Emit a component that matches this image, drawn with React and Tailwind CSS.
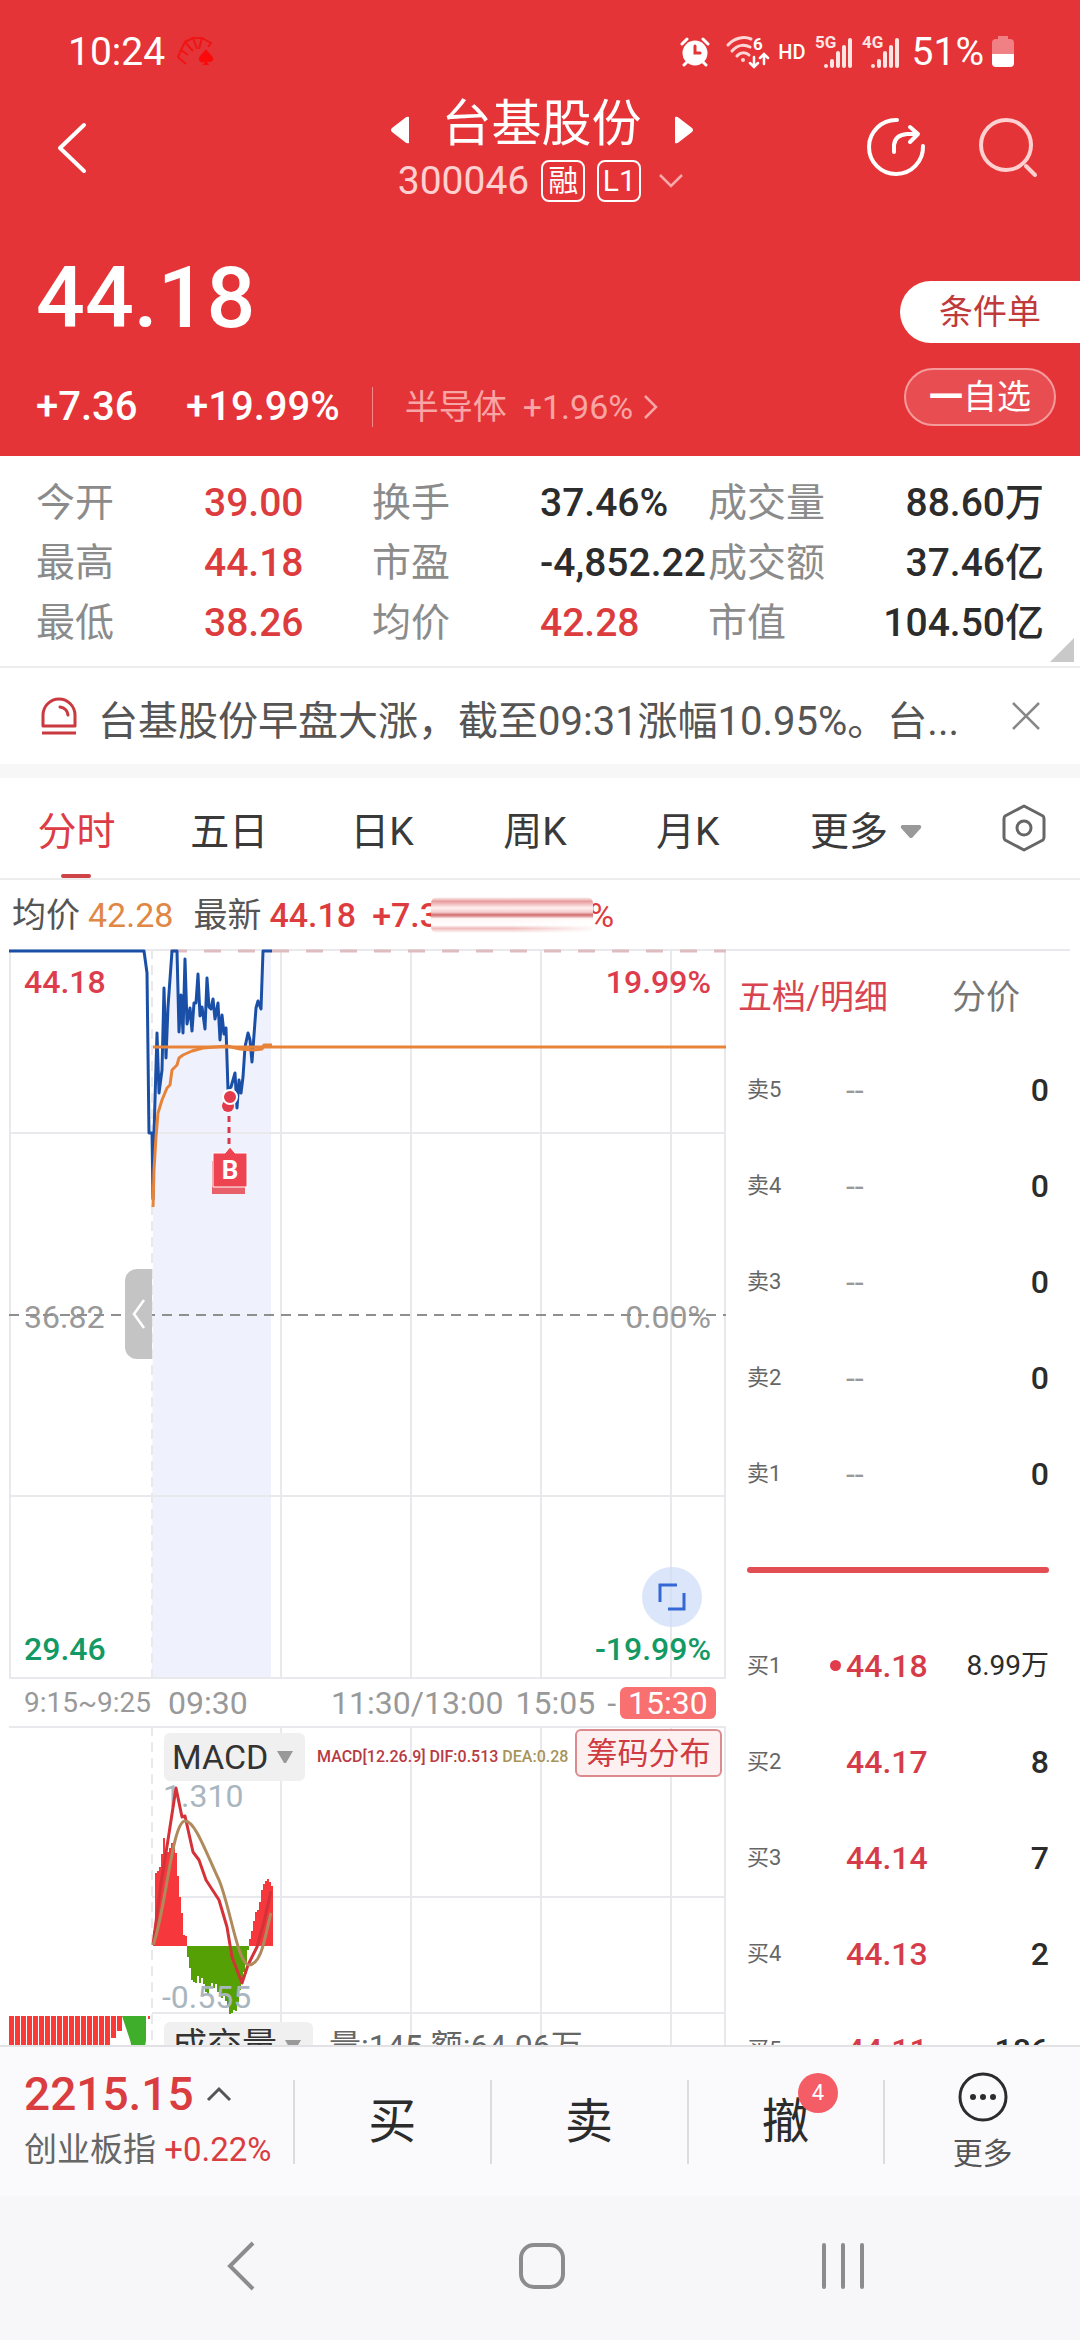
import React from 'react'

const stats = [
  { label: '今开', value: '39.00', tone: 'up' },
  { label: '换手', value: '37.46%' },
  { label: '成交量', value: '88.60万', end: true },
  { label: '最高', value: '44.18', tone: 'up' },
  { label: '市盈', value: '-4,852.22' },
  { label: '成交额', value: '37.46亿', end: true },
  { label: '最低', value: '38.26', tone: 'up' },
  { label: '均价', value: '42.28', tone: 'up' },
  { label: '市值', value: '104.50亿', end: true },
]

const periods = ['分时', '五日', '日K', '周K', '月K']

const asks = ['卖5', '卖4', '卖3', '卖2', '卖1']

const bids = [
  { label: '买1', price: '44.18', volume: '8.99万', current: true },
  { label: '买2', price: '44.17', volume: '8' },
  { label: '买3', price: '44.14', volume: '7' },
  { label: '买4', price: '44.13', volume: '2' },
  { label: '买5', price: '44.11', volume: '186' },
]

const pricePoints =
  '9,2 144,2 147,24 149,184 152,184 153,250 154,184 157,84 159,144 162,121 164,39 166,109 168,58 172,2 177,2 179,83 181,46 183,84 185,10 187,75 190,59 192,82 194,54 196,54 198,25 200,67 202,58 205,80 207,29 209,58 211,60 213,50 215,70 218,54 220,91 222,66 224,85 226,79 228,141 231,138 235,124 237,159 239,131 241,144 243,128 245,98 248,84 250,91 252,113 256,59 258,52 261,60 263,2 272,2'

const priceArea =
  '152,729 153,250 154,184 157,84 159,144 162,121 164,39 166,109 168,58 172,2 177,2 179,83 181,46 183,84 185,10 187,75 190,59 192,82 194,54 198,25 200,67 205,80 207,29 209,58 213,50 215,70 218,54 220,91 222,66 226,79 228,141 235,124 237,159 241,144 248,84 252,113 258,52 261,60 263,2 271,2 271,729'

const avgPoints =
  '153,258 154,221 156,188 158,164 162,151 167,139 170,136 172,121 177,116 179,109 183,106 192,102 203,99 227,97 240,100 253,101 262,100 264,96 272,96'

const ZERO = 220

// [x, y] of the far end of each histogram bar
const macdBars = [
  [153, 205], [155, 147], [157, 145], [159, 141], [161, 128], [163, 112], [165, 124], [167, 126], [169, 122], [171, 117],
  [173, 119], [175, 127], [177, 150], [179, 171], [181, 187], [183, 209], [185, 210], [187, 231], [189, 242], [191, 254],
  [193, 256], [195, 257], [197, 250], [199, 257], [201, 252], [203, 258], [205, 266], [207, 268], [209, 260], [211, 257],
  [213, 262], [215, 258], [217, 266], [219, 268], [221, 272], [223, 270], [225, 275], [227, 280], [229, 288], [231, 287],
  [233, 284], [235, 285], [237, 276], [239, 264], [241, 258], [243, 246], [245, 236], [247, 224], [249, 213], [251, 205],
  [253, 195], [255, 186], [257, 184], [259, 176], [261, 164], [263, 158], [265, 155], [267, 153], [269, 156], [271, 160],
]

const auctionBars = Array.from({ length: 19 }, (_, i) => 9 + i * 6)

function StatusBar() {
  return (
    <div className="flex h-24 items-center justify-between pt-2 pr-[66px] pl-[68px]">
      <div className="flex items-center gap-3">
        <span className="text-[39px] leading-none">10:24</span>
        <svg width="38" height="32" viewBox="0 0 38 32" fill="none" stroke="#f01414" strokeWidth="2">
          <path d="M9 28L1 21l3-7 7 5M4 14l4-8 8 9M8 6l8-4 4 11M16 2l9 0-3 11M25 2l9 5-3 4" />
          <path d="M29 13c-3 5-8 7-7 11 1 3 5 3 6 1l-2 4h6l-2-4c2 2 5 1 6-1 1-4-4-6-7-11z" fill="#fa0a0a" stroke="none" />
        </svg>
      </div>
      <div className="flex items-center">
        <svg width="30" height="30" viewBox="0 0 30 30" fill="none" stroke="#fff" strokeWidth="3" strokeLinecap="round">
          <circle cx="15" cy="16" r="12.5" fill="#fff" stroke="none" />
          <path d="M2 7l5-5M28 7l-5-5M7 25l-3 3M23 25l3 3" />
          <path d="M15 9v7h5" stroke="#e53437" />
        </svg>
        <svg className="ml-4 overflow-visible" width="44" height="34" viewBox="0 0 44 34" fill="none" stroke="#ffd5d5" strokeWidth="3" strokeLinecap="round">
          <path d="M2 10c6-7 16-9 23-6M6 16c5-6 12-7 18-4M11 21c3-4 9-4 12-1" />
          <circle cx="17" cy="25" r="2" fill="#ffd5d5" stroke="none" />
          <path d="M28 22v9M24 28l4 4 4-4M38 29v-9M34 23l4-4 4 4" stroke="#fff" strokeWidth="2.5" />
          <text x="27" y="15" fontSize="17" fontWeight="700" fill="#fff" stroke="none">6</text>
        </svg>
        <span className="ml-2 text-[20px] leading-none font-medium">HD</span>
        <Signal label="5G" />
        <Signal label="4G" />
        <span className="ml-3 text-[39px] leading-none">51%</span>
        <svg className="ml-2" width="22" height="32" viewBox="0 0 22 32">
          <path d="M6 0h10v3h2q4 0 4 4v11H0V7q0-4 4-4h2z" fill="#f08083" />
          <path d="M0 18h22v9q0 4-4 4H4q-4 0-4-4z" fill="#fff" />
        </svg>
      </div>
    </div>
  )
}

function Signal({ label }) {
  return (
    <svg className="ml-[9px]" width="38" height="42" viewBox="0 -4 38 42" stroke="#ffe4e4" strokeWidth="4" strokeLinecap="round">
      <text x="0" y="13" fontSize="17" fontWeight="700" fill="#ffe4e4" stroke="none">{label}</text>
      <path d="M11 31v0M17 26v5M23 18v13M29 12v19M35 5v26" />
    </svg>
  )
}

function Header() {
  return (
    <header className="shrink-0 bg-[#e53437] text-white">
      <StatusBar />
      <div className="flex h-[106px] items-center justify-between pr-[41px] pl-[54px]">
        <button type="button" aria-label="返回" className="flex w-[164px] pb-1">
          <svg width="36" height="54" viewBox="0 0 36 54" fill="none" stroke="#fff" strokeWidth="4" strokeLinecap="round" strokeLinejoin="round">
            <path d="M30 5L6 28l24 23" />
          </svg>
        </button>
        <div className="flex flex-col items-center">
          <div className="flex items-center gap-8">
            <button type="button" aria-label="上一只">
              <svg className="mt-3" width="20" height="28" viewBox="0 0 20 28" fill="#fff"><path d="M19 1v26q-2 1-4-1L2 16q-2-2 0-4L15 2q2-2 4-1z" /></svg>
            </button>
            <h1 className="text-[50px] leading-[56px]">台基股份</h1>
            <button type="button" aria-label="下一只">
              <svg className="mt-3" width="20" height="28" viewBox="0 0 20 28" fill="#fff"><path d="M1 1v26q2 1 4-1l13-10q2-2 0-4L5 2q-2-2-4-1z" /></svg>
            </button>
          </div>
          <button type="button" className="mt-2 flex items-center gap-3">
            <span className="text-[39px] leading-[42px] text-[#ffd0d0]">300046</span>
            <span className="flex h-[42px] w-11 items-center justify-center rounded-lg border-2 border-white text-[30px] leading-none">融</span>
            <span className="flex h-[42px] w-11 items-center justify-center rounded-lg border-2 border-white text-[30px] leading-none">L1</span>
            <svg className="ml-1" width="28" height="18" viewBox="0 0 28 18" fill="none" stroke="#f7aaaa" strokeWidth="2.5"><path d="M3 3l11 11L25 3" /></svg>
          </button>
        </div>
        <div className="flex w-[174px] items-center justify-between pb-1">
          <button type="button" aria-label="分享">
            <svg width="62" height="62" viewBox="0 0 62 62" fill="none" stroke="#fff" strokeWidth="4" strokeLinecap="round" strokeLinejoin="round">
              <path d="M32 4A27 27 0 1 0 58 30" />
              <path d="M29 36v-7q1-10 13-11h10M45 11l8 7-8 8" />
            </svg>
          </button>
          <button type="button" aria-label="搜索">
            <svg width="62" height="62" viewBox="0 0 62 62" fill="none" stroke="#ffd0d0" strokeWidth="4" strokeLinecap="round">
              <circle cx="29" cy="29" r="25" />
              <path d="M49 50l9 9" />
            </svg>
          </button>
        </div>
      </div>
      <div className="flex justify-between pb-[26px]">
        <div className="pt-12 pl-9">
          <div className="text-[86px] leading-[96px] font-medium">44.18</div>
          <div className="mt-9 flex h-12 items-center pt-[2px] whitespace-nowrap">
            <span className="w-[150px] text-[40px] font-medium">+7.36</span>
            <span className="text-[40px] font-medium">+19.99%</span>
            <span className="ml-8 h-10 w-px bg-[#f28a8b]" />
            <a href="#sector" className="ml-8 flex items-center text-[34px] text-[#f8a5a5]">
              半导体
              <span className="ml-4">+1.96%</span>
              <svg className="ml-2" width="18" height="28" viewBox="0 0 18 28" fill="none" stroke="#f8a5a5" strokeWidth="2.5"><path d="M4 3l11 11L4 25" /></svg>
            </a>
          </div>
        </div>
        <div className="flex flex-col items-end pt-[79px]">
          <button type="button" className="h-[62px] w-[180px] rounded-l-full bg-white text-[34px] leading-none text-[#c0393b]">条件单</button>
          <button type="button" className="mt-[25px] mr-6 h-[58px] w-[152px] rounded-full border-2 border-[#f59a9b] bg-[#e84e51] text-[34px] leading-none">
            <b className="font-bold">一</b>自选
          </button>
        </div>
      </div>
    </header>
  )
}

function Stats() {
  return (
    <section className="relative shrink-0 border-b-2 border-[#ececee] px-9 pt-[17px] pb-[13px]">
      <dl className="grid grid-cols-3">
        {stats.map((s) => (
          <div key={s.label} className="grid h-[60px] grid-cols-2 items-center whitespace-nowrap text-[39px] leading-none">
            <dt className="text-[#8b8b8b]">{s.label}</dt>
            <dd className={`font-medium ${s.tone === 'up' ? 'text-[#dd3c3e]' : 'text-[#2c2c2c]'} ${s.end ? 'flex justify-end' : ''}`}>
              {s.value}
            </dd>
          </div>
        ))}
      </dl>
      <svg className="absolute right-[6px] bottom-1" width="24" height="24" viewBox="0 0 24 24"><path d="M24 0v24H0z" fill="#c9c9c9" /></svg>
    </section>
  )
}

function News() {
  return (
    <section className="flex h-24 shrink-0 items-center px-10">
      <svg className="shrink-0" width="38" height="38" viewBox="0 0 38 38" fill="none" stroke="#c9393f" strokeWidth="3">
        <path d="M3 29V18a16 16 0 0 1 32 0v11z" strokeLinejoin="round" />
        <path d="M20 10q7 1 8 8" strokeLinecap="round" />
        <path d="M2 36h34" />
      </svg>
      <a href="#news" className="ml-5 min-w-0 flex-1 pt-3 text-[40px] leading-[56px] whitespace-nowrap text-[#555]">
        台基股份早盘大涨，截至09:31涨幅10.95%。台...
      </a>
      <button type="button" aria-label="关闭" className="ml-4">
        <svg width="28" height="28" viewBox="0 0 28 28" stroke="#888" strokeWidth="2.5"><path d="M1 1l26 26M27 1L1 27" /></svg>
      </button>
    </section>
  )
}

function PeriodTabs() {
  return (
    <nav className="grid h-[102px] shrink-0 grid-cols-[15fr_15fr_15fr_15fr_15fr_20fr_11fr] border-b-2 border-[#ececee] text-[39px] leading-none text-[#3a3a3a]">
      {periods.map((p, i) => (
        <button
          key={p}
          type="button"
          className={i === 0 ? 'relative pt-2 text-[#dd3c46]' : 'relative pt-2'}
        >
          {p}
          {i === 0 && <span className="absolute bottom-0 left-1/2 h-1 w-[30px] -translate-x-1/2 rounded-sm bg-[#cf4347]" />}
        </button>
      ))}
      <button type="button" className="flex items-center justify-center gap-3 pt-2">
        更多
        <svg width="22" height="14" viewBox="0 0 22 14"><path d="M2 0h18q2 1 1 3l-9 10h-2L1 3Q0 1 2 0z" fill="#999" /></svg>
      </button>
      <button type="button" aria-label="设置" className="flex items-center justify-center">
        <svg width="44" height="48" viewBox="0 0 44 48" fill="none" stroke="#666" strokeWidth="3" strokeLinejoin="round">
          <path d="M22 2l19 10q1 1 1 3v18q0 2-1 3L22 46 3 36q-1-1-1-3V15q0-2 1-3z" />
          <circle cx="22" cy="24" r="7" />
        </svg>
      </button>
    </nav>
  )
}

function QuoteLine() {
  return (
    <div className="flex h-[69px] shrink-0 items-center px-3 text-[34px] leading-none text-[#555]">
      均价
      <span className="ml-2 text-[#e08746]">42.28</span>
      <span className="ml-5">最新</span>
      <span className="ml-2 font-medium text-[#dd3c3e]">44.18</span>
      <span className="ml-4 font-medium text-[#dd3c3e]">+7.3</span>
      {/* masked part of the change figure */}
      <svg className="relative -ml-2 shrink-0" width="162" height="36" viewBox="0 0 162 36">
        <defs>
          <linearGradient id="mask" x1="0" y1="0" x2="0" y2="1">
            <stop offset="0" stopColor="#fff" />
            <stop offset="0.12" stopColor="#e79a9a" />
            <stop offset="0.3" stopColor="#fff1f1" />
            <stop offset="0.42" stopColor="#f6cfcf" />
            <stop offset="0.5" stopColor="#cf6a6a" />
            <stop offset="0.6" stopColor="#fff4f4" />
            <stop offset="0.78" stopColor="#fff" />
            <stop offset="0.87" stopColor="#f0b9b9" />
            <stop offset="1" stopColor="#fff" />
          </linearGradient>
          <linearGradient id="fade" x1="0" y1="0" x2="1" y2="0">
            <stop offset="0.5" stopColor="#fff" stopOpacity="0" />
            <stop offset="1" stopColor="#fff" stopOpacity="0.9" />
          </linearGradient>
        </defs>
        <rect width="162" height="36" rx="6" fill="url(#mask)" />
        <rect y="23" width="162" height="13" fill="url(#fade)" />
      </svg>
      <span className="-ml-1 text-[#dd3c3e]">%</span>
    </div>
  )
}

function PriceChart() {
  return (
    <div className="relative">
      <svg viewBox="0 0 726 730" className="block h-auto w-full" fill="none">
        <polygon points={priceArea} fill="#eff2fd" />
        <g stroke="#e9e9ed" strokeWidth="2">
          <path d="M9 1H726M9 184H726M9 547H726M9 729H726" />
          <path d="M10 0V730M281 0V730M411 0V730M541 0V730M671 0V730M725 0V730" />
          <path d="M152 0V730" strokeDasharray="10 6" />
        </g>
        <path d="M170 2H726" stroke="#dfbcc0" strokeWidth="3" strokeDasharray="17 17" />
        <g fontSize="32" fontWeight="500">
          <text x="24" y="44" fill="#dd3c4c">44.18</text>
          <text x="711" y="44" fill="#dd3c4c" textAnchor="end">19.99%</text>
          <text x="24" y="379" fill="#999" fontWeight="400">36.82</text>
          <text x="711" y="379" fill="#999" fontWeight="400" textAnchor="end">0.00%</text>
          <text x="24" y="711" fill="#139a64">29.46</text>
          <text x="711" y="711" fill="#139a64" textAnchor="end">-19.99%</text>
        </g>
        <path d="M9 366H726" stroke="#8f8f8f" strokeWidth="2" strokeDasharray="10 7" />
        <polyline points={pricePoints} stroke="#1a4fa8" strokeWidth="3" strokeLinejoin="round" />
        <path d="M153 98H726" stroke="#e8833a" strokeWidth="3" />
        <polyline points={avgPoints} stroke="#e8833a" strokeWidth="3" strokeLinejoin="round" />
        <path d="M229 167V200" stroke="#d9384a" strokeWidth="3" strokeDasharray="6 5" />
        <circle cx="228" cy="157" r="6" fill="#e23b4c" />
        <circle cx="230" cy="148" r="7" fill="#e23b4c" stroke="#fff" strokeWidth="2" />
        <path d="M212 212h33v33h-33z" fill="#e8606a" />
        <path d="M213 204h12l5-6 5 6h12v34h-34z" fill="#ee4452" stroke="#fff" />
        <text x="230" y="230" fontSize="26" fontWeight="700" fill="#fff" textAnchor="middle">B</text>
      </svg>
      <button type="button" aria-label="展开集合竞价" className="absolute top-[320px] left-[125px] flex h-[90px] w-[27px] items-center justify-center rounded-l-xl bg-[#c4c4c4]">
        <svg width="14" height="30" viewBox="0 0 14 30" fill="none" stroke="#fff" strokeWidth="2.5"><path d="M12 1L2 15l10 14" /></svg>
      </button>
      <button type="button" aria-label="全屏" className="absolute right-6 bottom-[52px] flex size-[60px] items-center justify-center rounded-full bg-[#ccdcf8]/70">
        <svg width="28" height="28" viewBox="0 0 28 28" fill="none" stroke="#3568d4" strokeWidth="3"><path d="M2 19V2h17M26 10v16H10" /></svg>
      </button>
    </div>
  )
}

function TimeAxis() {
  return (
    <div className="flex h-[47px] items-center pl-6 text-[32px] leading-none whitespace-nowrap text-[#999]">
      <span className="w-[144px] text-[28px]">9:15~9:25</span>
      <span className="w-[163px]">09:30</span>
      <span>11:30/13:00</span>
      <span className="ml-3">15:05</span>
      <span className="ml-3">-</span>
      <span className="ml-1 rounded-md bg-[#f8706f] px-2 text-white">15:30</span>
    </div>
  )
}

function MacdChart() {
  return (
    <div className="relative">
      <svg viewBox="0 0 726 288" className="block h-auto w-full" fill="none">
        <g stroke="#e9e9ed" strokeWidth="2">
          <path d="M9 1H726M152 171H726M152 287H726" />
          <path d="M281 0V288M411 0V288M541 0V288M671 0V288M725 0V288" />
          <path d="M152 0V288" strokeDasharray="10 6" />
        </g>
        <text x="163" y="81" fontSize="32" fill="#aab6bf">1.310</text>
        {macdBars.map(([x, y]) => (
          <rect
            key={x}
            x={x}
            y={Math.min(y, ZERO)}
            width="2"
            height={Math.abs(y - ZERO)}
            fill={y < ZERO ? '#f6383d' : '#55a005'}
          />
        ))}
        <polyline
          points="153,219 161,157 168,114 176,62 182,91 185,90 193,126 199,134 206,154 219,174 227,201 232,231 242,257 248,239 257,221 264,196 271,165"
          stroke="#d43238"
          strokeWidth="3"
          strokeLinejoin="round"
        />
        <path d="M153 219C165 190 172 95 185 95C195 95 205 124 219 154C230 180 238 239 249 239C262 238 265 210 271 187" stroke="#b08a5c" strokeWidth="3" />
        <text x="162" y="282" fontSize="32" fill="#aab6bf">-0.555</text>
      </svg>
      <div className="absolute inset-x-0 top-[3px] flex items-start pr-1 pl-[164px]">
        <button type="button" className="mt-1 flex h-12 w-[141px] shrink-0 items-center justify-between rounded-md bg-[#f0f0f0] px-2 pr-3 text-[34px] leading-none text-[#333]">
          MACD
          <Caret />
        </button>
        <div className="mt-4 ml-3 min-w-0 flex-1 overflow-hidden text-[16px] leading-6 font-medium whitespace-nowrap text-[#b83a42]">
          MACD[12.26.9] DIF:0.513 <span className="text-[#a8935a]">DEA:0.28</span>
        </div>
        <button type="button" className="h-12 w-[147px] shrink-0 rounded-md border-2 border-[#dd8a8e] bg-[#fdf0f0] text-[31px] leading-none text-[#cf3b42]">筹码分布</button>
      </div>
    </div>
  )
}

function Caret() {
  return <svg width="16" height="12" viewBox="0 0 16 12"><path d="M0 0h16L9 12H7z" fill="#999" /></svg>
}

function VolumeChart() {
  return (
    <div className="relative">
      <svg viewBox="0 0 726 120" className="block h-auto w-full">
        <path d="M281 0V120M411 0V120M541 0V120M671 0V120M725 0V120" stroke="#e9e9ed" strokeWidth="2" />
        <path d="M152 0V120" stroke="#e9e9ed" strokeWidth="2" strokeDasharray="10 6" />
        {auctionBars.map((x, i) => (
          <rect key={x} x={x} y="2" width="5" height={i < 17 ? 80 : 29 - (i - 16) * 7} fill="#fb3a38" />
        ))}
        <path d="M122 2h24v24l-3 20h-8l-5-20-4-12z" fill="#3fae2a" />
        <rect x="148" y="2" width="2" height="3" fill="#fb3a38" />
      </svg>
      <div className="absolute inset-x-0 top-2 flex items-center pl-[164px]">
        <button type="button" className="flex h-12 w-[149px] items-center justify-between rounded-md bg-[#f0f0f0] px-2 pr-3 text-[35px] leading-none text-[#333]">
          成交量
          <Caret />
        </button>
        <span className="ml-4 text-[32px] leading-none text-[#666]">量:145 额:64.06万</span>
      </div>
    </div>
  )
}

function OrderBook() {
  return (
    <aside className="w-[354px] shrink-0 pr-[10px]">
      <div className="flex h-[93px] items-center border-t-2 border-[#e9e9ed] pl-3 text-[34px] leading-none">
        <button type="button" className="text-[#d8444f]">五档/明细</button>
        <button type="button" className="ml-16 text-[#777]">分价</button>
      </div>
      <table className="ml-[21px] w-[302px] table-fixed text-[32px] leading-none">
        <colgroup>
          <col className="w-[99px]" />
          <col className="w-[90px]" />
          <col />
        </colgroup>
        <tbody>
          {asks.map((label) => (
            <tr key={label} className="h-24">
              <th scope="row" className="text-left text-[22px] font-normal text-[#666]">{label}</th>
              <td className="text-[#999]">--</td>
              <td className="text-right font-medium text-[#2c2c2c]">0</td>
            </tr>
          ))}
          <tr className="h-24">
            <td colSpan={3}><div className="h-[6px] rounded-full bg-[#e24e54]" /></td>
          </tr>
          {bids.map((b) => (
            <tr key={b.label} className="h-24">
              <th scope="row" className="text-left text-[22px] font-normal text-[#666]">{b.label}</th>
              <td className="relative font-medium text-[#d63b49]">
                {b.current && <span className="absolute top-[42px] -left-4 size-[11px] rounded-full bg-[#e23b4c]" />}
                {b.price}
              </td>
              <td className={`text-right text-[#2c2c2c] ${b.current ? 'text-[28px]' : 'font-medium'}`}>{b.volume}</td>
            </tr>
          ))}
        </tbody>
      </table>
    </aside>
  )
}

function Divider() {
  return <span className="h-[84px] w-[2px] shrink-0 bg-[#dcdcde]" />
}

function TradeBar() {
  return (
    <footer className="flex h-[151px] shrink-0 items-center border-t-2 border-[#e2e2e4] bg-[#fafafc] text-[#2c2c2c]">
      <div className="w-[293px] pl-6 whitespace-nowrap">
        <button type="button" className="flex items-center gap-3 text-[46px] leading-[56px] font-medium text-[#d93d3f]">
          2215.15
          <svg width="26" height="16" viewBox="0 0 26 16" fill="none" stroke="#555" strokeWidth="3"><path d="M2 14L13 3l11 11" /></svg>
        </button>
        <div className="text-[33px] leading-[56px] text-[#666]">
          创业板指 <span className="text-[#d93d3f]">+0.22%</span>
        </div>
      </div>
      <Divider />
      <button type="button" className="h-full flex-1 text-[48px] leading-none">买</button>
      <Divider />
      <button type="button" className="h-full flex-1 text-[48px] leading-none">卖</button>
      <Divider />
      <button type="button" className="h-full flex-1 text-[48px] leading-none">
        <span className="relative">
          撤
          <span className="absolute -top-5 -right-7 flex size-10 items-center justify-center rounded-full bg-[#f45c66] text-[22px] text-white">4</span>
        </span>
      </button>
      <Divider />
      <button type="button" className="flex h-full flex-1 flex-col items-center pt-6 text-[30px] leading-none text-[#555]">
        <svg width="52" height="52" viewBox="0 0 52 52">
          <circle cx="26" cy="26" r="23" fill="none" stroke="#2c2c2c" strokeWidth="3" />
          <g fill="#2c2c2c"><circle cx="16" cy="26" r="3" /><circle cx="26" cy="26" r="3" /><circle cx="36" cy="26" r="3" /></g>
        </svg>
        <span className="mt-4">更多</span>
      </button>
    </footer>
  )
}

function SystemNav() {
  return (
    <nav className="grid h-36 shrink-0 grid-cols-3 bg-[#f7f7f9] pr-[86px] pl-[90px] pb-1">
      <button type="button" aria-label="返回" className="flex items-center justify-center">
        <svg width="30" height="50" viewBox="0 0 30 50" fill="none" stroke="#8c8c8e" strokeWidth="4"><path d="M27 2L4 25l23 23" /></svg>
      </button>
      <button type="button" aria-label="主屏幕" className="flex items-center justify-center">
        <svg width="48" height="48" viewBox="0 0 48 48" fill="none" stroke="#8c8c8e" strokeWidth="4"><rect x="3" y="3" width="42" height="42" rx="13" /></svg>
      </button>
      <button type="button" aria-label="最近任务" className="flex items-center justify-center">
        <svg width="46" height="48" viewBox="0 0 46 48" stroke="#8c8c8e" strokeWidth="4" strokeLinecap="round"><path d="M4 3v42M23 3v42M42 3v42" /></svg>
      </button>
    </nav>
  )
}

export default function App() {
  return (
    <div className="flex h-screen flex-col bg-white font-['Roboto','Noto_Sans_CJK_SC',sans-serif]">
      <Header />
      <Stats />
      <News />
      <div className="h-[14px] shrink-0 bg-[#f7f7f7]" />
      <PeriodTabs />
      <QuoteLine />
      <main className="flex min-h-0 flex-1 overflow-hidden">
        <div className="min-w-0 flex-1">
          <PriceChart />
          <TimeAxis />
          <MacdChart />
          <VolumeChart />
        </div>
        <OrderBook />
      </main>
      <TradeBar />
      <SystemNav />
    </div>
  )
}
